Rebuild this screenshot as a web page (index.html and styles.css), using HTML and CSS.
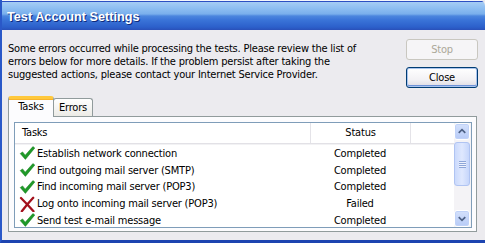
FILE: index.html
```html
<!DOCTYPE html>
<html>
<head>
<meta charset="utf-8">
<link rel="stylesheet" href="styles.css">
</head>
<body>
<div class="window">
  <div class="titlebar"><span class="title">Test Account Settings</span></div>
  <div class="content">
    <div class="top">
      <p class="msg">Some errors occurred while processing the tests. Please review the list of<br>errors below for more details. If the problem persist after taking the<br>suggested actions, please contact your Internet Service Provider.</p>
      <div class="buttons">
        <button class="btn disabled">Stop</button>
        <button class="btn default">Close</button>
      </div>
    </div>
    <div class="tabs">
      <div class="tab active">Tasks</div>
      <div class="tab">Errors</div>
    </div>
    <div class="panel">
      <div class="listview">
        <div class="list">
          <div class="header">
            <div class="col-task">Tasks</div>
            <div class="col-status">Status</div>
            <div class="col-rest"></div>
          </div>
          <div class="row">
            <svg class="ico" viewBox="0 0 16 16"><path class="ok" d="M1.2 8.6 L3.6 6.9 L6.2 10.2 L13.9 1.6 L15.8 3 L6.4 14.4 Z"/></svg>
            <span class="col-task">Establish network connection</span><span class="col-status">Completed</span>
          </div>
          <div class="row">
            <svg class="ico" viewBox="0 0 16 16"><path class="ok" d="M1.2 8.6 L3.6 6.9 L6.2 10.2 L13.9 1.6 L15.8 3 L6.4 14.4 Z"/></svg>
            <span class="col-task">Find outgoing mail server (SMTP)</span><span class="col-status">Completed</span>
          </div>
          <div class="row">
            <svg class="ico" viewBox="0 0 16 16"><path class="ok" d="M1.2 8.6 L3.6 6.9 L6.2 10.2 L13.9 1.6 L15.8 3 L6.4 14.4 Z"/></svg>
            <span class="col-task">Find incoming mail server (POP3)</span><span class="col-status">Completed</span>
          </div>
          <div class="row">
            <svg class="ico" viewBox="0 0 16 16"><path class="fail" d="M2 2 Q8 8 14.5 15.2 M14.2 1.8 Q8 8.5 2.8 15.2"/></svg>
            <span class="col-task">Log onto incoming mail server (POP3)</span><span class="col-status">Failed</span>
          </div>
          <div class="row">
            <svg class="ico" viewBox="0 0 16 16"><path class="ok" d="M1.2 8.6 L3.6 6.9 L6.2 10.2 L13.9 1.6 L15.8 3 L6.4 14.4 Z"/></svg>
            <span class="col-task">Send test e-mail message</span><span class="col-status">Completed</span>
          </div>
        </div>
        <div class="scrollbar">
          <div class="sbtn"><svg viewBox="0 0 15 15"><path d="M4 9 L7.5 5.5 L11 9"/></svg></div>
          <div class="thumb"><span class="grip"></span></div>
          <div class="track"></div>
          <div class="sbtn"><svg viewBox="0 0 15 15"><path d="M4 6 L7.5 9.5 L11 6"/></svg></div>
        </div>
      </div>
    </div>
  </div>
</div>
</body>
</html>
```

FILE: styles.css
```css
html, body {
  margin: 0;
  padding: 0;
  background: #ffffff;
  overflow: hidden;
}
body {
  width: 485px;
  height: 243px;
  font-family: "DejaVu Sans Condensed", "Liberation Sans", sans-serif;
  font-size: 11px;
  letter-spacing: -0.2px;
  color: #000;
}
.window {
  width: 485px;
  height: 243px;
  box-sizing: border-box;
  border-left: 2px solid #2a58c8;
  border-bottom: 3px solid #1d44b0;
  background: #ecebef;
  display: flex;
  flex-direction: column;
}
.titlebar {
  height: 30px;
  flex: none;
  border-top-right-radius: 6px;
  background: linear-gradient(to bottom,
    #f4f6fb 0px, #f4f6fb 1px,
    #2d50c2 1px, #2d50c2 2px,
    #a6cdf5 2px, #8fbff2 8px, #79afec 14px,
    #4b86de 16px, #3a74d8 20px, #2c60cb 27px, #2a56c0 29px, #2a4fb8 30px);
  display: flex;
  align-items: center;
  padding-left: 5px;
  padding-top: 3px;
  box-sizing: border-box;
}
.title {
  font-family: "Liberation Sans", sans-serif;
  font-weight: bold;
  font-size: 12.7px;
  letter-spacing: 0;
  color: #ffffff;
  text-shadow: 1px 1px 0 #0e2a7a;
}
.content {
  flex: 1;
  display: flex;
  flex-direction: column;
  padding: 9px 7px 0 6px;
}
.top {
  display: flex;
  justify-content: space-between;
  align-items: flex-start;
}
.msg {
  margin: 3px 0 0 0;
  width: 390px;
  line-height: 13px;
  white-space: nowrap;
}
.buttons {
  display: flex;
  flex-direction: column;
  gap: 7px;
}
.btn {
  width: 72px;
  height: 21px;
  font-family: inherit;
  font-size: 11px;
  letter-spacing: -0.2px;
  padding: 0;
  border-radius: 3px;
  box-sizing: border-box;
}
.btn.disabled {
  border: 1px solid #c9c7c0;
  background: #f6f5f7;
  color: #aca899;
}
.btn.default {
  border: 1px solid #003c74;
  background: linear-gradient(to bottom, #ffffff 0%, #f3f2f5 60%, #dcdae2 100%);
  box-shadow: inset 0 0 0 1px #a9c4ee, inset 0 -1px 0 1px #6d92d8;
  color: #000;
}
.tabs {
  margin-top: 8px;
  display: flex;
  align-items: flex-end;
  height: 20px;
  padding-left: 0;
}
.tab {
  box-sizing: border-box;
  height: 18px;
  padding: 0 5px;
  border: 1px solid #919b9c;
  border-bottom: none;
  border-radius: 3px 3px 0 0;
  background: linear-gradient(to bottom, #ffffff, #ecebe6);
  line-height: 17px;
  margin-left: -1px;
  width: 40px;
  text-align: center;
}
.tab.active {
  position: relative;
  z-index: 1;
  margin-left: 0;
  height: 21px;
  width: 46px;
  margin-bottom: -1px;
  background: #fcfcfe;
  border-top: 3px solid #ffc83c;
  box-shadow: inset 0 1px 0 #f8b32a;
  line-height: 15px;
  padding-top: 0;
}
.panel {
  box-sizing: border-box;
  height: 116px;
  margin-right: 1px;
  border: 1px solid #919b9c;
  background: #fcfcfe;
  padding: 5px 4px 3px 5px;
}
.listview {
  box-sizing: border-box;
  height: 106px;
  border: 1px solid #7f9db9;
  background: #ffffff;
  display: flex;
}
.list {
  flex: 1;
  overflow: hidden;
}
.header {
  display: flex;
  height: 20px;
  border-bottom: 1px solid #e2e1e6;
  box-shadow: 0 1px 0 #f2f2f4;
  line-height: 20px;
}
.header .col-task {
  width: 288px;
  padding-left: 7px;
  border-right: 1px solid #e4e3e8;
}
.header .col-status {
  width: 99px;
  text-align: center;
  border-right: 1px solid #e4e3e8;
}
.header .col-rest {
  flex: 1;
}
.row {
  display: flex;
  align-items: center;
  height: 16.75px;
  padding-left: 4px;
}
.header + .row {
  margin-top: 1px;
}
.ico {
  width: 16px;
  height: 16px;
  flex: none;
  margin-right: 2px;
}
.ok {
  fill: #1f9a28;
  stroke: #127a1a;
  stroke-width: 0.5;
  stroke-linejoin: round;
}
.fail {
  fill: none;
  stroke: #a3101c;
  stroke-width: 2.3;
  stroke-linecap: round;
}
.row .col-task {
  width: 273px;
  white-space: nowrap;
}
.row .col-status {
  width: 100px;
  text-align: center;
}
.scrollbar {
  width: 17px;
  flex: none;
  display: flex;
  flex-direction: column;
  background: #f4f3f6;
  box-sizing: border-box;
  padding: 0 1px 0 0;
}
.sbtn {
  height: 17px;
  flex: none;
  box-sizing: border-box;
  border: 1px solid #ffffff;
  border-radius: 3px;
  background: linear-gradient(to bottom, #d4e1fc, #b7cbf7);
  box-shadow: inset 0 0 0 1px #c0d2f8;
  display: flex;
  align-items: center;
  justify-content: center;
}
.sbtn svg {
  width: 15px;
  height: 15px;
}
.sbtn path {
  fill: none;
  stroke: #4d6185;
  stroke-width: 1.8;
}
.thumb {
  margin-top: 2px;
  height: 44px;
  flex: none;
  box-sizing: border-box;
  border: 1px solid #b0c4f2;
  border-radius: 3px;
  background: linear-gradient(to right, #cbdafc, #dfe8fe 50%, #c6d6fb);
  display: flex;
  align-items: center;
  justify-content: center;
}
.grip {
  width: 7px;
  height: 7px;
  background: repeating-linear-gradient(to bottom, #8ea6d8 0px, #8ea6d8 1px, #eef2fd 1px, #eef2fd 2px);
}
.track {
  flex: 1;
}
```
